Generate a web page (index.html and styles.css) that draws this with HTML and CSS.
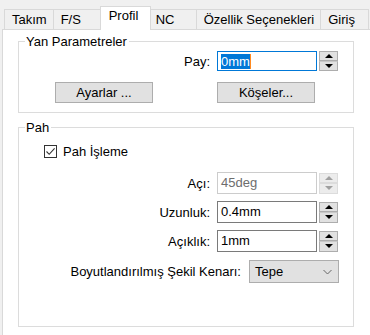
FILE: index.html
```html
<!DOCTYPE html>
<html lang="tr">
<head>
    <meta charset="UTF-8">
    <title>Profil</title>
    <link rel="stylesheet" href="styles.css">
</head>
<body>

    <!-- Sekmeler -->
    <div class="tabs">
        <div class="tab first">Takım</div>
        <div class="tab">F/S</div>
        <div class="tab active">Profil</div>
        <div class="tab">NC</div>
        <div class="tab">Özellik Seçenekleri</div>
        <div class="tab">Giriş</div>
    </div>

    <div class="panel">

        <!-- Yan Parametreler -->
        <fieldset class="group side">
            <legend>Yan Parametreler</legend>
            <div class="row">
                <span class="label">Pay:</span>
                <div class="field focus"><span class="sel">0mm</span><span class="caret"></span></div>
                <div class="spin">
                    <div class="arrow up"></div>
                    <div class="arrow down"></div>
                </div>
            </div>
            <div class="buttons">
                <div class="btn">Ayarlar ...</div>
                <div class="btn">Köşeler...</div>
            </div>
        </fieldset>

        <!-- Pah -->
        <fieldset class="group chamfer">
            <legend>Pah</legend>
            <div class="check-row">
                <span class="checkbox">
                    <svg width="11" height="11" viewBox="0 0 11 11"><path d="M1.5 5.5 L4.2 8.3 L9.6 2.4" fill="none" stroke="#333" stroke-width="1.1"/></svg>
                </span>
                <span>Pah İşleme</span>
            </div>
            <div class="rows">
                <div class="row tall">
                    <span class="label">Açı:</span>
                    <div class="field disabled">45deg</div>
                    <div class="spin disabled">
                        <div class="arrow up"></div>
                        <div class="arrow down"></div>
                    </div>
                </div>
                <div class="row tall">
                    <span class="label">Uzunluk:</span>
                    <div class="field">0.4mm</div>
                    <div class="spin">
                        <div class="arrow up"></div>
                        <div class="arrow down"></div>
                    </div>
                </div>
                <div class="row tall">
                    <span class="label">Açıklık:</span>
                    <div class="field">1mm</div>
                    <div class="spin">
                        <div class="arrow up"></div>
                        <div class="arrow down"></div>
                    </div>
                </div>
                <div class="row combo-row">
                    <span class="label">Boyutlandırılmış Şekil Kenarı:</span>
                    <div class="combo">
                        <span>Tepe</span>
                        <svg width="9" height="6" viewBox="0 0 9 6"><path d="M0.5 1 L4.5 5 L8.5 1" fill="none" stroke="#666" stroke-width="1"/></svg>
                    </div>
                </div>
            </div>
        </fieldset>

    </div>

</body>
</html>
```

FILE: styles.css
```css
* {
    margin: 0;
    padding: 0;
    box-sizing: border-box;
}

body {
    font-family: 'Liberation Sans', Arial, sans-serif;
    font-size: 13px;
    color: #000;
    background-color: #f0f0f0;
    width: 370px;
    height: 335px;
    overflow: hidden;
}

/* Sekmeler */
.tabs {
    display: flex;
    align-items: flex-end;
    height: 29px;
    padding-left: 4px;
}

.tab {
    height: 20px;
    min-width: 49px;
    padding: 0 6px 0 7px;
    margin-left: -1px;
    border: 1px solid #d9d9d9;
    border-bottom: none;
    background-color: #f0f0f0;
    line-height: 19px;
    white-space: nowrap;
}

.tab.first {
    margin-left: 0;
}

.tab.active {
    position: relative;
    z-index: 1;
    height: 24px;
    min-width: 51px;
    margin: 0 -2px -1px -2px;
    padding: 0 6px 0 8px;
    background-color: #fff;
    line-height: 17px;
}

.panel {
    background-color: #fff;
    border-top: 1px solid #d9d9d9;
    border-left: 1px solid #d9d9d9;
    margin-left: 2px;
    height: 306px;
    padding: 4px 16px 0 15px;
}

/* Grup kutuları */
.group {
    border: 1px solid #dcdcdc;
    padding: 0 15px 0 0;
}

.group legend {
    margin-left: 6px;
    padding: 0 2px 0 1px;
    line-height: 15px;
}

.side {
    padding-bottom: 9px;
}

.chamfer {
    margin-top: 7px;
    height: 207px;
}

.row {
    display: flex;
    justify-content: flex-end;
    align-items: center;
}

.side .row {
    margin-top: 2px;
}

.label {
    margin-right: 7px;
}

.field {
    width: 100px;
    height: 20px;
    border: 1px solid #7a7a7a;
    background-color: #fff;
    padding-left: 3px;
    line-height: 18px;
    display: flex;
    align-items: center;
}

.row.tall .field {
    height: 22px;
}

.field.focus {
    border-color: #0078d7;
}

.field.disabled {
    border-color: #cccccc;
    color: #6d6d6d;
}

.sel {
    background-color: #0078d7;
    color: #fff;
    line-height: 15px;
}

.caret {
    width: 1px;
    height: 15px;
    background-color: #ff8a1f;
}

/* Yukarı / aşağı düğmeleri */
.spin {
    display: flex;
    flex-direction: column;
    width: 19px;
    height: 20px;
    margin-left: 2px;
}

.row.tall .spin {
    height: 21px;
}

.arrow {
    flex: 1;
    border: 1px solid #adadad;
    background-color: #e1e1e1;
    display: flex;
    align-items: center;
    justify-content: center;
}

.arrow.down {
    border-top-color: #c8c8c8;
}

.arrow::after {
    content: "";
    border-left: 4px solid transparent;
    border-right: 4px solid transparent;
}

.arrow.up::after {
    border-bottom: 4px solid #000;
}

.arrow.down::after {
    border-top: 4px solid #000;
}

.spin.disabled .arrow {
    border-color: #dcdcdc;
    background-color: #ececec;
}

.spin.disabled .arrow.up::after {
    border-bottom-color: #a0a0a0;
}

.spin.disabled .arrow.down::after {
    border-top-color: #a0a0a0;
}

.buttons {
    display: flex;
    gap: 64px;
    margin-top: 11px;
    padding-left: 36px;
}

.btn {
    width: 98px;
    height: 21px;
    border: 1px solid #adadad;
    background-color: #e1e1e1;
    text-align: center;
    line-height: 19px;
}

/* Pah işleme */
.check-row {
    display: flex;
    align-items: center;
    gap: 6px;
    margin-top: 9px;
    padding-left: 25px;
}

.checkbox {
    width: 13px;
    height: 13px;
    border: 1px solid #333;
    background-color: #fff;
    display: flex;
}

.rows {
    display: flex;
    flex-direction: column;
    gap: 7px;
    margin-top: 13px;
}

.combo-row {
    margin-top: 1px;
}

.combo-row .label {
    margin-right: 8px;
}

.combo {
    width: 90px;
    height: 23px;
    border: 1px solid #adadad;
    background-color: #e1e1e1;
    display: flex;
    align-items: center;
    justify-content: space-between;
    padding: 0 6px 0 5px;
    margin-right: -1px;
}
```
